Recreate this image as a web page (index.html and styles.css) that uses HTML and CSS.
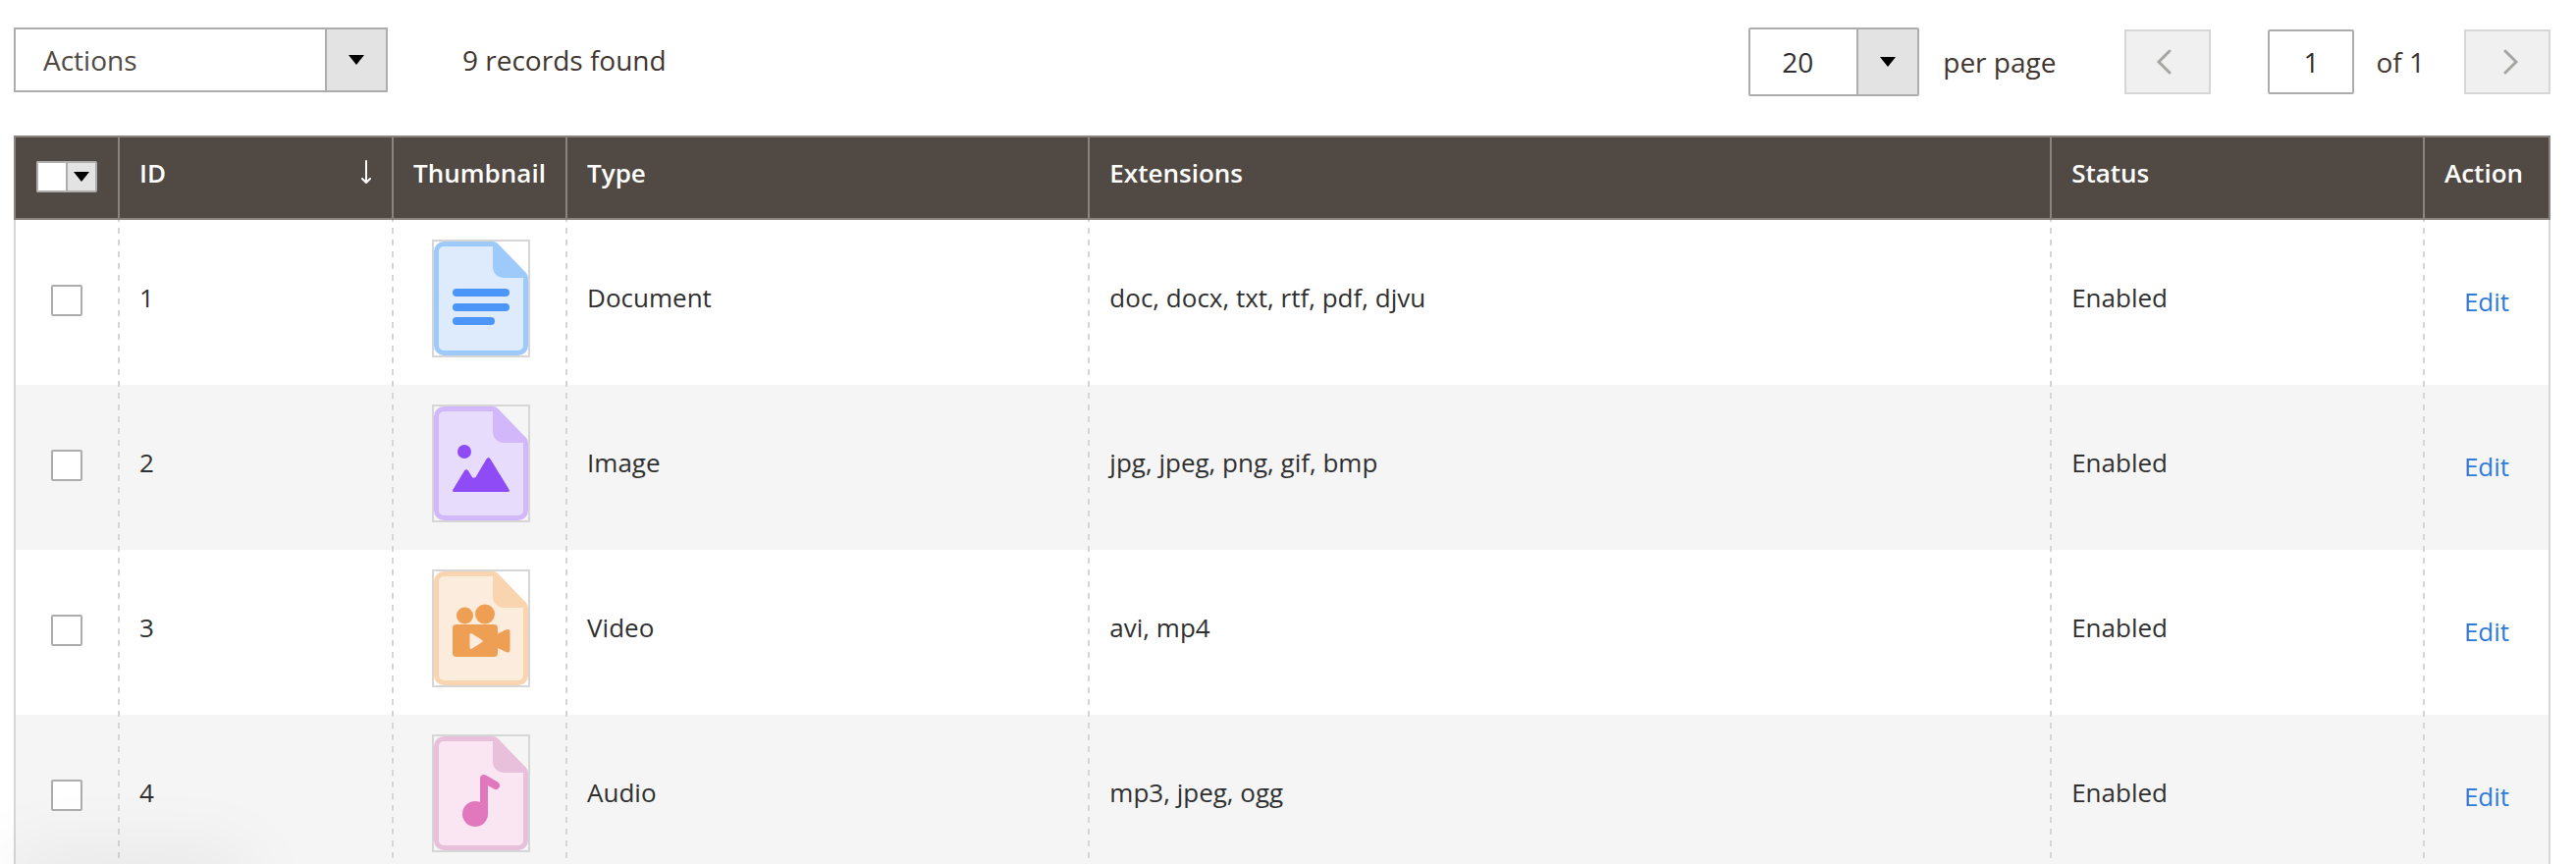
FILE: index.html
```html
<!DOCTYPE html>
<html lang="en">
<head>
    <meta charset="UTF-8">
    <meta name="viewport" content="width=device-width, initial-scale=1.0">
    <title>File Types</title>
    <link rel="stylesheet" href="styles.css">
</head>
<body>
    <!-- page outline shared by all the file icons -->
    <svg class="defs" aria-hidden="true">
        <symbol id="file" viewBox="0 0 96 116">
            <path fill="currentColor" d="M10 0H60Q63 0 65 2L94 32Q96 34 96 37V106A10 10 0 0 1 86 116H10A10 10 0 0 1 0 106V10A10 10 0 0 1 10 0Z"/>
            <path class="paper" d="M10 5H60V26A11 11 0 0 0 71 37H91V106A5 5 0 0 1 86 111H10A5 5 0 0 1 5 106V10A5 5 0 0 1 10 5Z"/>
        </symbol>
    </svg>

    <main>
        <div class="toolbar">
            <select class="select actions" aria-label="Actions">
                <option>Actions</option>
            </select>
            <p class="records">9 records found</p>
            <div class="pager">
                <select class="select size" id="page-size">
                    <option>20</option>
                </select>
                <label class="size-label" for="page-size">per page</label>
                <button class="page-btn prev" type="button" aria-label="Previous page" disabled>
                    <svg width="16" height="26" viewBox="0 0 16 26"><path d="M14 2L3 13L14 24"/></svg>
                </button>
                <input class="page-input" id="page-num" type="text" value="1">
                <label class="page-label" for="page-num">of 1</label>
                <button class="page-btn next" type="button" aria-label="Next page" disabled>
                    <svg width="16" height="26" viewBox="0 0 16 26"><path d="M2 2L13 13L2 24"/></svg>
                </button>
            </div>
        </div>

        <table class="grid">
            <colgroup>
                <col class="col-check">
                <col class="col-id">
                <col class="col-thumb">
                <col class="col-type">
                <col class="col-ext">
                <col class="col-status">
                <col class="col-action">
            </colgroup>
            <thead>
                <tr>
                    <th class="check">
                        <div class="multicheck">
                            <input class="multicheck-box" type="checkbox" aria-label="Select all">
                            <button class="multicheck-btn" type="button" aria-label="Selection options"></button>
                        </div>
                    </th>
                    <th>
                        <div class="sorted">
                            ID
                            <svg class="sort" width="12" height="26" viewBox="0 0 12 26"><path d="M6 1V23M2 19L6 23L10 19"/></svg>
                        </div>
                    </th>
                    <th>Thumbnail</th>
                    <th>Type</th>
                    <th>Extensions</th>
                    <th>Status</th>
                    <th>Action</th>
                </tr>
            </thead>
            <tbody>
                <tr>
                    <td class="check"><input class="checkbox" type="checkbox" aria-label="Select 1"></td>
                    <td>1</td>
                    <td class="thumb">
                        <svg class="icon doc" viewBox="0 0 96 116">
                            <use href="#file"/>
                            <path class="line" d="M23 52H73M23 67H73M23 81H58"/>
                        </svg>
                    </td>
                    <td>Document</td>
                    <td>doc, docx, txt, rtf, pdf, djvu</td>
                    <td>Enabled</td>
                    <td class="action"><a href="#">Edit</a></td>
                </tr>
                <tr>
                    <td class="check"><input class="checkbox" type="checkbox" aria-label="Select 2"></td>
                    <td>2</td>
                    <td class="thumb">
                        <svg class="icon image" viewBox="0 0 96 116">
                            <use href="#file"/>
                            <circle class="shape" cx="31" cy="46" r="7"/>
                            <path class="shape" d="M19.5 84.500L31 65.500Q33 63 35 65.500L39 72Q40.500 73.500 42.500 72L53.500 53.500Q55.500 50.500 57.500 53.500L76.500 84.500Q78 87 75 87H21Q18 87 19.500 84.500Z"/>
                        </svg>
                    </td>
                    <td>Image</td>
                    <td>jpg, jpeg, png, gif, bmp</td>
                    <td>Enabled</td>
                    <td class="action"><a href="#">Edit</a></td>
                </tr>
                <tr>
                    <td class="check"><input class="checkbox" type="checkbox" aria-label="Select 3"></td>
                    <td>3</td>
                    <td class="thumb">
                        <svg class="icon video" viewBox="0 0 96 116">
                            <use href="#file"/>
                            <circle class="shape" cx="31.500" cy="45" r="8.500"/>
                            <circle class="shape" cx="52" cy="43.500" r="10"/>
                            <rect class="shape" x="19" y="54" width="46" height="33" rx="4"/>
                            <path class="shape" d="M64 64L73 59.500Q77.500 57.500 77.500 62V79.500Q77.500 84 73.500 82L64 77.500Z"/>
                            <path class="paper" d="M36.500 65Q36.500 62 39 63.500L48.500 69.500Q51 71 48.500 72.500L39 78.500Q36.500 80 36.500 77Z"/>
                        </svg>
                    </td>
                    <td>Video</td>
                    <td>avi, mp4</td>
                    <td>Enabled</td>
                    <td class="action"><a href="#">Edit</a></td>
                </tr>
                <tr>
                    <td class="check"><input class="checkbox" type="checkbox" aria-label="Select 4"></td>
                    <td>4</td>
                    <td class="thumb">
                        <svg class="icon audio" viewBox="0 0 96 116">
                            <use href="#file"/>
                            <circle class="shape" cx="42" cy="79" r="13"/>
                            <path class="line" d="M51 79V43L63 50"/>
                        </svg>
                    </td>
                    <td>Audio</td>
                    <td>mp3, jpeg, ogg</td>
                    <td>Enabled</td>
                    <td class="action"><a href="#">Edit</a></td>
                </tr>
            </tbody>
        </table>
    </main>
</body>
</html>
```
FILE: styles.css
```css
*{
    box-sizing: border-box;
    margin: 0;
    padding: 0;
}
body{
    height: 100vh;
    overflow: hidden;
    background-color: #fff;
    color: #41362f;
    font-family: "Open Sans", sans-serif;
    font-size: 28px;
    line-height: 38px;
}
/* soft shadow in the bottom left corner */
body::after{
    content: "";
    position: fixed;
    top: 100%;
    left: 10px;
    width: 240px;
    height: 40px;
    box-shadow: 0 0 80px rgba(0, 0, 0, 0.1);
    pointer-events: none;
}
main{
    padding: 28px 26px 0 14px;
}
input, select, button{
    appearance: none;
    font: inherit;
    border: 2px solid #adadad;
    border-radius: 2px;
    background-color: #fff;
}
.defs{
    display: none;
}

/* toolbar */
.toolbar{
    display: flex;
    align-items: flex-start;
    margin-bottom: 40px;
}
.select{
    color: #303030;
    /* arrow, divider, grey panel */
    background-image:
        url("data:image/svg+xml,%3Csvg xmlns='http://www.w3.org/2000/svg' width='16' height='10'%3E%3Cpath d='M0 0H16L8 10Z'/%3E%3C/svg%3E"),
        linear-gradient(#adadad, #adadad),
        linear-gradient(#e3e3e3, #e3e3e3);
    background-position: right 22px center, right 60px top, right top;
    background-size: 16px 10px, 2px 100%, 60px 100%;
    background-repeat: no-repeat;
}
.actions{
    width: 381px;
    height: 66px;
    padding-left: 28px;
    border-radius: 0;
    color: #514943;
}
.records{
    margin: 14px 0 0 76px;
}
.pager{
    display: flex;
    align-items: center;
    margin-left: auto;
}
.size{
    width: 174px;
    height: 70px;
    padding-left: 32px;
}
.size-label{
    margin: 0 70px 0 24px;
}
.page-btn{
    display: flex;
    align-items: center;
    justify-content: center;
    width: 88px;
    height: 66px;
    border-color: #d6d6d6;
    border-radius: 0;
    background-color: #f0f0f0;
}
.page-btn svg{
    fill: none;
    stroke: #a8a6a3;
    stroke-width: 3;
    stroke-linecap: round;
}
.prev{
    padding-right: 8px;
}
.next{
    padding-left: 8px;
}
.page-input{
    width: 88px;
    height: 66px;
    margin-left: 58px;
    color: #303030;
    text-align: center;
}
.page-label{
    margin: 0 40px 0 22px;
}

/* grid */
.grid{
    width: 100%;
    table-layout: fixed;
    border-spacing: 0;
    font-size: 26px;
    line-height: 36px;
}
.col-check{
    width: 108px;
}
.col-id{
    width: 10.8%;
}
.col-thumb{
    width: 177px;
}
.col-type{
    width: 20.6%;
}
.col-status{
    width: 14.7%;
}
.col-action{
    width: 128px;
}
.grid th{
    padding: 18px 20px 28px;
    border: 2px solid #8a837f;
    border-left: none;
    background-color: #514943;
    color: #fff;
    font-weight: 600;
    text-align: left;
    white-space: nowrap;
}
.grid th:first-child{
    border-left: 2px solid #8a837f;
}
.grid td{
    height: 168px;
    padding: 20px 20px 30px;
    color: #303030;
    /* dashed column line */
    background: repeating-linear-gradient(#d6d6d6 0 2px, transparent 2px 8px, #d6d6d6 8px 12px) right top / 2px 100% no-repeat;
}
.grid td:first-child{
    border-left: 2px solid #d6d6d6;
}
.grid td:last-child{
    border-right: 2px solid #d6d6d6;
    background: none;
}
.grid tbody tr:nth-child(even){
    background-color: #f5f5f5;
}
.grid .check{
    padding: 20px 2px 24px 0;
}
.grid th.check{
    padding: 22px 0 24px;
}
.grid .action{
    padding: 22px 0 24px;
    text-align: center;
}
.grid a{
    color: #2f7bd9;
    text-decoration: none;
}
.grid .thumb{
    padding: 20px 0 28px;
}
.sorted{
    display: flex;
    align-items: center;
    justify-content: space-between;
}
.sort{
    fill: none;
    stroke: #fff;
    stroke-width: 2;
    stroke-linecap: round;
    stroke-linejoin: round;
}
.checkbox{
    display: block;
    width: 32px;
    height: 32px;
    margin: 0 auto;
}
.multicheck{
    display: flex;
    width: 62px;
    height: 32px;
    margin: 0 auto;
}
.multicheck-box{
    width: 30px;
    border-right: none;
    border-radius: 2px 0 0 2px;
}
.multicheck-btn{
    width: 32px;
    border-radius: 0 2px 2px 0;
    background: #e3e3e3 url("data:image/svg+xml,%3Csvg xmlns='http://www.w3.org/2000/svg' width='16' height='10'%3E%3Cpath d='M0 0H16L8 10Z'/%3E%3C/svg%3E") center no-repeat;
}

/* file icons */
.icon{
    display: block;
    width: 100px;
    height: 120px;
    margin: 0 auto;
    border: 2px solid #d6d6d6;
}
.paper{
    fill: var(--paper);
}
.shape{
    fill: var(--ink);
}
.line{
    fill: none;
    stroke: var(--ink);
    stroke-width: 8;
    stroke-linecap: round;
    stroke-linejoin: round;
}
.doc{
    color: #9ec9fb;
    --paper: #deebfc;
    --ink: #4b96f8;
}
.image{
    color: #d2b8fa;
    --paper: #e7dcfc;
    --ink: #8f4bf6;
}
.video{
    color: #f8d4af;
    --paper: #fcecdd;
    --ink: #ef9f53;
}
.audio{
    color: #e9c0db;
    --paper: #fae6f3;
    --ink: #e178be;
}
```
